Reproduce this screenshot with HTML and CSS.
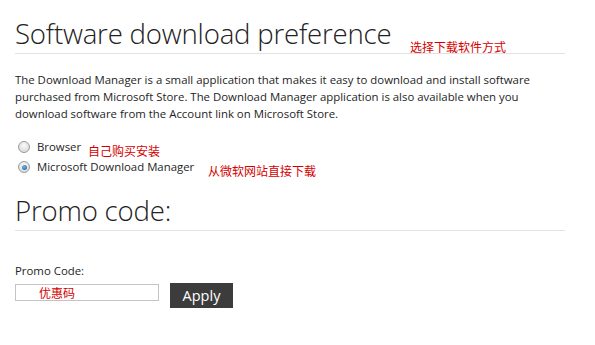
FILE: index.html
```html
<!DOCTYPE html>
<html lang="en">
<head>
<meta charset="utf-8">
<title>Software download preference</title>
<link rel="stylesheet" href="styles.css">
</head>
<body>
<div class="page">
  <section class="section">
    <h1 class="title">Software download preference</h1>
    <span class="note note-title">选择下载软件方式</span>
    <p class="desc">The Download Manager is a small application that makes it easy to download and install software purchased from Microsoft Store. The Download Manager application is also available when you download software from the Account link on Microsoft Store.</p>
    <div class="options">
      <label class="option"><span class="radio"></span>Browser</label>
      <label class="option"><span class="radio checked"></span>Microsoft Download Manager</label>
    </div>
    <span class="note note-browser">自己购买安装</span>
    <span class="note note-mdm">从微软网站直接下载</span>
  </section>
  <section class="section promo">
    <h1 class="title">Promo code:</h1>
    <div class="field-label">Promo Code:</div>
    <div class="field-row">
      <div class="input"><span class="note-input">优惠码</span></div>
      <button class="btn">Apply</button>
    </div>
  </section>
</div>
</body>
</html>
```

FILE: styles.css
```css
html, body {
  margin: 0;
  padding: 0;
  background: #ffffff;
}
.page {
  position: relative;
  padding: 14px 30px 0 15px;
  font-family: "Open Sans", "Noto Sans", sans-serif;
  color: #1e1e1e;
}
.section {
  position: relative;
}
.title {
  margin: 0;
  font-weight: 300;
  font-size: 27.6px;
  line-height: 39px;
  color: #222;
  border-bottom: 1px solid #e2e2e2;
  letter-spacing: -0.2px;
}
.desc {
  margin: 17px 0 0;
  font-size: 11.4px;
  line-height: 17px;
  color: #1e1e1e;
  width: 540px;
}
.options {
  margin-top: 17px;
  display: flex;
  flex-direction: column;
  gap: 4px;
}
.option {
  display: flex;
  align-items: center;
  gap: 7px;
  font-size: 11.4px;
  line-height: 16px;
  padding-left: 3px;
}
.radio {
  width: 10px;
  height: 10px;
  border-radius: 50%;
  border: 1px solid #9a9a9a;
  background: radial-gradient(circle at 50% 35%, #fafafa, #d2d2d2);
  box-sizing: content-box;
  display: flex;
  align-items: center;
  justify-content: center;
}
.radio.checked::after {
  content: "";
  width: 5px;
  height: 5px;
  border-radius: 50%;
  background: radial-gradient(circle at 40% 35%, #6fb3e8, #1c5a99);
}
.note {
  position: absolute;
  font-family: "Noto Sans CJK SC", sans-serif;
  font-size: 12px;
  line-height: 14px;
  color: #d40000;
}
.note-title { left: 395px; top: 26px; }
.note-browser { left: 73px; top: 130px; }
.note-mdm { left: 193px; top: 150px; }
.promo {
  margin-top: 16px;
}
.field-label {
  margin-top: 33px;
  font-size: 11.4px;
  line-height: 14px;
}
.field-row {
  margin-top: 5px;
  display: flex;
  align-items: flex-start;
  gap: 11px;
}
.input {
  width: 142px;
  height: 15px;
  margin-top: 1px;
  border: 1px solid #c4c4c4;
  position: relative;
}
.note-input {
  position: absolute;
  left: 23px;
  top: 1px;
  font-family: "Noto Sans CJK SC", sans-serif;
  font-size: 12px;
  line-height: 14px;
  color: #d40000;
}
.btn {
  width: 63px;
  height: 25px;
  border: 0;
  background: #3c3c3c;
  color: #fff;
  font-family: "Open Sans", sans-serif;
  font-size: 14.5px;
  padding: 0;
  line-height: 25px;
}
```
